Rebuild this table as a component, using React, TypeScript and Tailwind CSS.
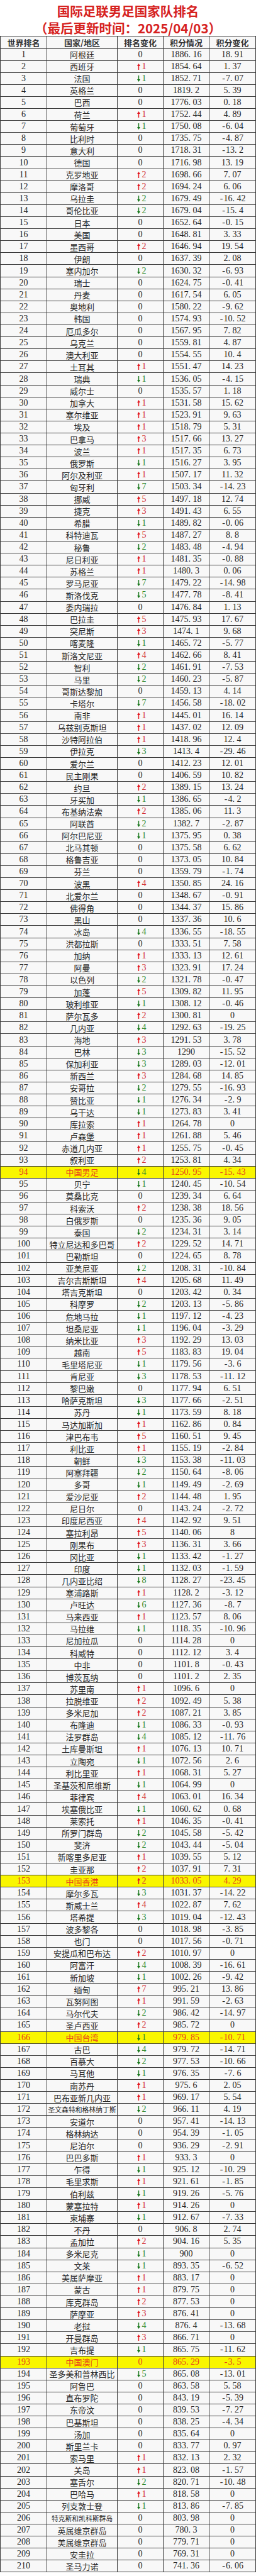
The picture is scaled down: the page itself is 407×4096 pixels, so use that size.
import React from "react";

const RAW = `阿根廷,0,1886.16,18.91
西班牙,1,1854.64,1.37
法国,-1,1852.71,-7.07
英格兰,0,1819.2,5.39
巴西,0,1776.03,0.18
荷兰,1,1752.44,4.89
葡萄牙,-1,1750.08,-6.04
比利时,0,1735.75,-4.87
意大利,0,1718.31,-13.2
德国,0,1716.98,13.19
克罗地亚,2,1698.66,7.07
摩洛哥,2,1694.24,6.06
乌拉圭,-2,1679.49,-16.42
哥伦比亚,-2,1679.04,-15.4
日本,0,1652.64,-0.15
美国,0,1648.81,3.33
墨西哥,2,1646.94,19.54
伊朗,0,1637.39,2.08
塞内加尔,-2,1630.32,-6.93
瑞士,0,1624.75,-0.41
丹麦,0,1617.54,6.05
奥地利,0,1580.22,-9.62
韩国,0,1574.93,-10.52
厄瓜多尔,0,1567.95,7.82
乌克兰,0,1559.81,4.87
澳大利亚,0,1554.55,10.4
土耳其,1,1551.47,14.23
瑞典,-1,1536.05,-4.15
威尔士,0,1535.57,1.18
加拿大,1,1531.58,15.62
塞尔维亚,1,1523.91,9.63
埃及,1,1518.79,5.31
巴拿马,3,1517.66,13.27
波兰,1,1517.35,6.73
俄罗斯,-1,1516.27,3.95
阿尔及利亚,1,1507.17,11.32
匈牙利,-7,1503.34,-14.23
挪威,5,1497.18,12.74
捷克,3,1491.43,6.55
希腊,-1,1489.82,-0.06
科特迪瓦,5,1487.27,8.8
秘鲁,-2,1483.48,-4.94
尼日利亚,1,1481.35,-0.88
苏格兰,1,1480.3,0.06
罗马尼亚,-7,1479.22,-14.98
斯洛伐克,-5,1477.78,-8.41
委内瑞拉,0,1476.84,1.13
巴拉圭,5,1475.93,17.67
突尼斯,3,1474.1,9.68
喀麦隆,-1,1465.72,-5.77
斯洛文尼亚,4,1462.66,8.41
智利,-2,1461.91,-7.53
马里,-2,1460.23,-5.87
哥斯达黎加,0,1459.13,4.14
卡塔尔,-7,1456.58,-18.02
南非,1,1445.01,16.14
乌兹别克斯坦,1,1437.02,12.09
沙特阿拉伯,1,1418.96,12.4
伊拉克,-3,1413.4,-29.46
爱尔兰,0,1412.23,12.01
民主刚果,0,1406.59,10.82
约旦,2,1389.15,13.24
牙买加,-1,1386.65,-4.2
布基纳法索,2,1385.06,11.3
阿联酋,-2,1382.7,-2.87
阿尔巴尼亚,-1,1375.95,0.38
北马其顿,0,1375.58,6.62
格鲁吉亚,0,1373.05,10.84
芬兰,0,1359.79,-1.74
波黑,4,1350.85,24.16
北爱尔兰,0,1348.67,-0.91
佛得角,0,1344.37,15.86
黑山,0,1337.36,10.6
冰岛,-4,1336.55,-18.55
洪都拉斯,0,1333.51,7.58
加纳,1,1333.13,12.61
阿曼,3,1323.91,17.24
以色列,-2,1321.78,-0.47
加蓬,5,1309.82,11.95
玻利维亚,-1,1308.12,-0.46
萨尔瓦多,2,1300.81,0
几内亚,-4,1292.63,-19.25
海地,3,1291.53,3.78
巴林,-3,1290,-15.52
保加利亚,-3,1289.03,-12.01
新西兰,3,1284.68,14.85
安哥拉,-2,1279.55,-16.93
赞比亚,-1,1276.34,-2.9
乌干达,-1,1273.83,3.41
库拉索,1,1264.78,0
卢森堡,1,1261.88,5.46
赤道几内亚,1,1255.75,-0.45
叙利亚,2,1253.81,4.34
中国男足,-4,1250.95,-15.43
贝宁,-1,1240.45,-10.54
莫桑比克,0,1239.34,6.64
科索沃,2,1238.38,18.56
白俄罗斯,0,1235.36,9.05
泰国,-2,1234.31,3.14
特立尼达和多巴哥,2,1229.52,14.71
巴勒斯坦,0,1224.65,8.78
亚美尼亚,-2,1208.31,-10.84
吉尔吉斯斯坦,4,1205.68,11.49
塔吉克斯坦,0,1203.42,0.34
科摩罗,-2,1203.13,-5.86
危地马拉,-1,1197.12,-4.23
坦桑尼亚,-1,1196.04,-3.29
纳米比亚,3,1192.29,13.03
越南,5,1183.83,19.04
毛里塔尼亚,-1,1179.56,-3.6
肯尼亚,-3,1178.53,-11.12
黎巴嫩,0,1177.94,6.51
哈萨克斯坦,-3,1177.66,-2.51
苏丹,-1,1173.59,8.18
马达加斯加,1,1162.86,0.84
津巴布韦,5,1160.51,9.45
利比亚,1,1155.19,-2.84
朝鲜,-3,1153.38,-11.03
阿塞拜疆,-2,1150.64,-8.06
多哥,-1,1149.49,-2.69
爱沙尼亚,2,1144.48,1.95
尼日尔,0,1143.24,-2.72
印度尼西亚,4,1142.92,9.51
塞拉利昂,5,1140.06,8
刚果布,3,1136.31,3.66
冈比亚,-1,1133.42,-1.27
印度,-1,1132.03,-1.59
几内亚比绍,-8,1128.27,-23.45
塞浦路斯,1,1128.2,-3.12
卢旺达,-6,1127.36,-8.7
马来西亚,1,1123.57,8.06
马拉维,-1,1118.35,-10.96
尼加拉瓜,0,1114.28,0
科威特,0,1112.12,3.4
中非,0,1101.8,-0.43
博茨瓦纳,0,1101.2,2.35
苏里南,1,1096.6,0
拉脱维亚,2,1092.49,5.38
多米尼加,2,1087.21,3.85
布隆迪,-1,1086.33,-0.93
法罗群岛,-4,1085.12,-11.76
土库曼斯坦,1,1076.13,10.71
立陶宛,-1,1072.56,2.6
利比里亚,1,1068.31,5.27
圣基茨和尼维斯,-1,1064.99,0
菲律宾,4,1063.01,16.34
埃塞俄比亚,-1,1060.62,0.68
莱索托,1,1046.35,-0.41
所罗门群岛,-2,1045.58,-5.42
斐济,-2,1043.44,-5.04
新喀里多尼亚,1,1039.55,5.12
圭亚那,2,1037.91,7.31
中国香港,2,1033.05,4.29
摩尔多瓦,-3,1031.37,-14.22
斯威士兰,4,1022.87,7.62
塔希提,-3,1019.04,-12.43
波多黎各,0,1018.98,-3.85
也门,0,1017.56,-0.71
安提瓜和巴布达,2,1010.97,0
阿富汗,-4,1008.39,-16.61
新加坡,-1,1002.26,-9.42
缅甸,7,995.21,13.86
瓦努阿图,1,991.59,-2.63
马尔代夫,-2,986.42,-14.97
圣卢西亚,2,985.72,0
中国台湾,-1,979.85,-10.71
古巴,-4,979.72,-14.71
百慕大,-2,977.53,-10.66
马耳他,-1,976.35,-7.6
南苏丹,1,975.6,2.05
巴布亚新几内亚,1,969.17,5.54
圣文森特和格林纳丁斯,-2,966.11,4.19
安道尔,0,957.41,-14.13
格林纳达,0,954.39,-1.05
尼泊尔,0,936.29,-2.91
巴巴多斯,1,933.3,0
乍得,-1,925.12,-10.29
毛里求斯,1,921.61,-1.85
伯利兹,-1,919.26,-5.76
蒙塞拉特,1,914.26,0
柬埔寨,-1,912.67,-7.33
不丹,0,906.8,2.74
孟加拉,2,904.16,5.35
多米尼克,-1,900,0
文莱,-1,893.35,-6.52
美属萨摩亚,1,883.17,0
蒙古,1,879.75,0
库克群岛,2,877.53,0
萨摩亚,3,876.41,0
老挝,-4,876.4,-13.68
开曼群岛,3,866.71,0
吉布提,-1,865.75,-11.62
中国澳门,0,865.29,-3.5
圣多美和普林西比,-5,865.08,-13.01
阿鲁巴,0,863.58,5.58
直布罗陀,0,843.19,-5.39
东帝汶,0,839.53,-7.27
巴基斯坦,0,838.25,-4.34
汤加,0,835.64,0
斯里兰卡,0,833.77,0.97
索马里,1,832.13,2.32
关岛,1,823.08,-1.57
塞舌尔,-2,820.71,-10.48
巴哈马,1,818.58,0
列支敦士登,-1,813.86,-7.85
特克斯和凯科斯群岛,0,803.98,0
英属维京群岛,0,780.3,0
美属维京群岛,0,779.71,0
安圭拉,0,769.31,0
圣马力诺,0,741.36,-6.06`;

type Row = { rank: number; name: string; change: number; score: string; delta: string };

const ROWS: Row[] = RAW.split("\n").map((line, i) => {
  const [name, change, score, delta] = line.split(",");
  return { rank: i + 1, name, change: Number(change), score, delta };
});

// 中国 / 港澳台 rows are marked in yellow
const HIGHLIGHT = new Set([94, 153, 166, 193]);

const serif = "font-['Liberation_Serif','Noto_Sans_CJK_SC',serif]";
const cjk = "font-['Noto_Sans_CJK_SC',sans-serif]";

// numbers in the source use a font where "." and "-" take a half-em slot
function Num({ v }: { v: string }) {
  return (
    <span className={`${serif} text-[14px] whitespace-nowrap`}>
      {v.split(/([.-])/).map((part, i) =>
        part === "." ? (
          <span key={i} className="inline-block w-[0.5em] text-left">.</span>
        ) : part === "-" ? (
          <span key={i} className="inline-block w-[0.5em] text-center">-</span>
        ) : (
          <React.Fragment key={i}>{part}</React.Fragment>
        )
      )}
    </span>
  );
}

function Arrow({ up }: { up: boolean }) {
  return (
    <svg width="5" height="10" viewBox="0 0 5 10" className="shrink-0">
      {up ? (
        <path d="M2.5 0 L5 4 H3.2 V10 H1.8 V4 H0 Z" fill="#e3141c" />
      ) : (
        <path d="M2.5 10 L5 6 H3.2 V0 H1.8 V6 H0 Z" fill="#17771a" />
      )}
    </svg>
  );
}

function Change({ n, hl }: { n: number; hl: boolean }) {
  if (n === 0) {
    return <span className={`${serif} text-[14px] ${hl ? "text-[#e8411a]" : "text-[#1f1f1f]"}`}>0</span>;
  }
  const up = n > 0;
  return (
    <span className="flex items-center gap-[3px] pl-[4px]">
      <Arrow up={up} />
      <span className={`${serif} text-[14px] ${up ? "text-[#d32f35]" : "text-[#2f8a2f]"}`}>{Math.abs(n)}</span>
    </span>
  );
}

const grid = "grid grid-cols-[74px_112px_73px_73px_1fr] h-[19.11px] border-b border-[#3a3a3a]";
const cell = "flex items-center justify-center border-r border-[#3a3a3a] overflow-hidden leading-none";
const lastCell = "flex items-center justify-center overflow-hidden leading-none";

function TableRow({ row }: { row: Row }) {
  const hl = HIGHLIGHT.has(row.rank);
  const text = hl ? "text-[#e8411a]" : "text-[#262626]";
  const long = row.name.length >= 9;
  return (
    <div className={`${grid} ${hl ? "bg-[#f9f600]" : "bg-[#f8f8f8]"}`}>
      <div className={`${cell} ${text}`}>
        <Num v={String(row.rank)} />
      </div>
      <div className={`${cell} ${text}`}>
        <span className={`${cjk} whitespace-nowrap ${long ? "text-[10.8px]" : "text-[13px]"}`}>{row.name}</span>
      </div>
      <div className={cell}>
        <Change n={row.change} hl={hl} />
      </div>
      <div className={`${cell} ${text}`}>
        <Num v={row.score} />
      </div>
      <div className={`${lastCell} ${text}`}>
        <Num v={row.delta} />
      </div>
    </div>
  );
}

export default function App() {
  const headers = ["世界排名", "国家/地区", "排名变化", "积分情况", "积分变化"];
  return (
    <div className="w-[407px] bg-white">
      <div className={`h-[57.4px] pt-[3.5px] flex flex-col items-center ${cjk} font-bold text-[#d6221f] text-[20.5px] leading-[27px]`}>
        <div>国际足联男足国家队排名</div>
        <div>（最后更新时间：2025/04/03）</div>
      </div>

      <div className="border-t border-l border-r border-[#3a3a3a]">
        <div className={`${grid} bg-[#f8f8f8]`}>
          {headers.map((h, i) => (
            <div key={h} className={`${i < 4 ? cell : lastCell} ${cjk} font-bold text-[13px] text-[#333]`}>
              {h}
            </div>
          ))}
        </div>
        {ROWS.map((row) => (
          <TableRow key={row.rank} row={row} />
        ))}
      </div>
    </div>
  );
}
